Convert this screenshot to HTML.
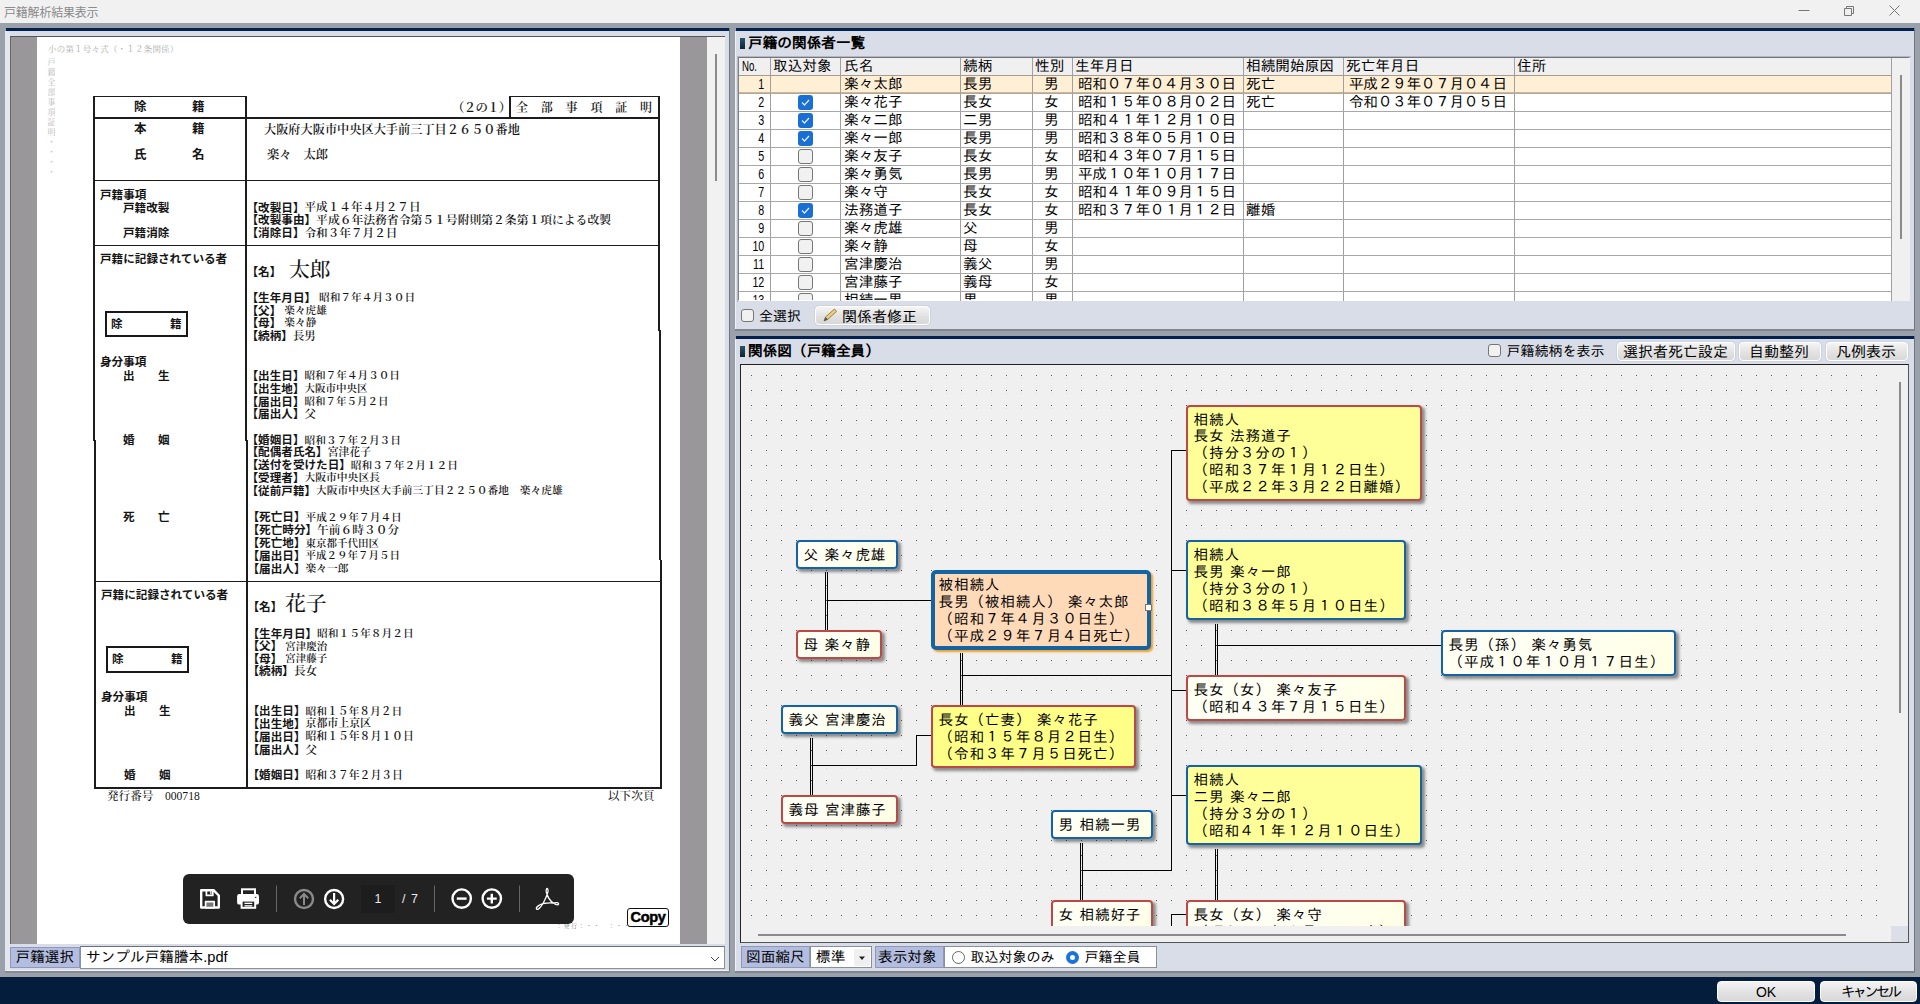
<!DOCTYPE html>
<html lang="ja"><head><meta charset="utf-8"><title>戸籍解析結果表示</title>
<style>
*{box-sizing:border-box;margin:0;padding:0}
html,body{width:1920px;height:1004px;overflow:hidden;background:#9aa1ab}
body{position:relative;font-family:'Liberation Sans','IPAGothic','Noto Sans CJK JP',sans-serif;font-size:14.67px;color:#000;line-height:1}
.abs{position:absolute}
.t{position:absolute;white-space:pre;line-height:1}
.titlebar{left:0;top:0;width:1920px;height:23px;background:#f1f1f1}
.panel{position:absolute;background:#d9dde7}
.navy{position:absolute;background:#06204a}
.doc .t{font-family:'Liberation Serif','Noto Serif CJK JP','Noto Serif CJK SC',serif;font-weight:600;color:#151515;font-size:11.6px}
.doc .g{font-family:'Liberation Sans','Noto Sans CJK JP',sans-serif;font-weight:700}.doc .gl{font-family:'Liberation Sans','Noto Sans CJK JP',sans-serif;font-weight:700;position:relative;top:.5px}
.ln{position:absolute;background:#1c1c1c}
.hd{font-weight:700}
.btn{position:absolute;border:1px solid #fff;border-radius:4px;background:linear-gradient(#f4f4f4,#e2e2e2 55%,#d8d8d8);box-shadow:0 0 0 1px #cfd3dc;text-align:center;white-space:pre}
.cb{position:absolute;width:15px;height:15px;border:1px solid #767676;border-radius:3px;background:#f1f1f1}
.cbc{position:absolute;width:15px;height:15px;border-radius:3px;background:#1a6fd2}
.node{position:absolute;border-radius:4px;box-shadow:2.5px 2.5px 3px rgba(0,0,0,.42);white-space:pre;letter-spacing:.8px;word-spacing:.65px;font-size:14.67px;line-height:17.2px;padding:4.5px 0 0 5.5px;overflow:hidden}
.nb{border:2px solid #1464a4}
.nr{border:2px solid #b94a47}
.cy{background:#ffff99}.cc{background:linear-gradient(135deg,#fffff4 40%,#ffffe4)}.co{background:#ffdab9}.cg{background:#ffff88}
.c{position:absolute;background:#000}
.lab{position:absolute;background:#b3bde0;border:1px solid #8f98b8;white-space:pre}
</style></head><body>

<div class="abs titlebar"></div>
<div class="t" style="left:4px;top:6.5px;font-size:12px;color:#8a8a8a;font-family:'Liberation Sans','Noto Sans CJK JP',sans-serif;letter-spacing:-.2px">戸籍解析結果表示</div>
<svg class="abs" style="left:1780px;top:0" width="140" height="23" viewBox="0 0 140 23"><g stroke="#777" stroke-width="1" fill="none"><path d="M18.5 10.5h11"/><path d="M64.500 8.500h7v7h-7zM66.500 8.500v-2h7v7h-2"/><path d="M109.500 5.500l10 10M119.500 5.500l-10 10"/></g></svg>
<div class="navy" style="left:6px;top:28px;width:724px;height:3px"></div>
<div class="panel" style="left:5px;top:31px;width:725px;height:940px;border-left:5px solid #e4e7ee;border-top:1px solid #d0e0f4;border-bottom:1px solid #eef0f5"></div>
<div class="abs" style="left:729px;top:28px;width:1px;height:944px;background:#6f7480"></div>
<div class="abs" style="left:5px;top:971px;width:725px;height:2px;background:#858a94"></div>
<div class="abs" style="left:10px;top:36px;width:715px;height:908px;background:#999799;border-top:1px solid #555;border-left:1px solid #666"></div>
<div class="abs" style="left:37px;top:37px;width:643px;height:907px;background:#fff"></div>
<div class="abs" style="left:707px;top:37px;width:18px;height:907px;background:#f1f1f1"></div>
<div class="abs" style="left:715px;top:54px;width:2px;height:127px;background:#8b8b8b"></div>
<div class="doc abs" style="left:0;top:0;width:740px;height:950px">
<div class="ln" style="left:93px;top:95.5px;width:153px;height:1.6px"></div>
<div class="ln" style="left:93px;top:95.5px;width:1.6px;height:345px"></div>
<div class="ln" style="left:94px;top:440px;width:1.6px;height:348.5px"></div>
<div class="ln" style="left:245px;top:95.5px;width:1.6px;height:345px"></div>
<div class="ln" style="left:246px;top:440px;width:1.6px;height:348.5px"></div>
<div class="ln" style="left:93px;top:117px;width:567px;height:1.6px"></div>
<div class="ln" style="left:658px;top:95.5px;width:1.6px;height:235px"></div>
<div class="ln" style="left:659px;top:330px;width:1.6px;height:230px"></div>
<div class="ln" style="left:660px;top:560px;width:1.6px;height:228.5px"></div>
<div class="ln" style="left:509px;top:95.5px;width:151px;height:1.6px"></div>
<div class="ln" style="left:509px;top:95.5px;width:1.6px;height:22px"></div>
<div class="ln" style="left:93px;top:179.7px;width:567px;height:1.5px"></div>
<div class="ln" style="left:93px;top:244.7px;width:567px;height:1.5px"></div>
<div class="ln" style="left:94px;top:580.5px;width:568px;height:1.5px"></div>
<div class="ln" style="left:94px;top:787px;width:568px;height:1.6px"></div>
<div class="abs" style="left:105px;top:311px;width:83px;height:26px;border:2px solid #181818"></div>
<div class="abs" style="left:106px;top:646px;width:83px;height:27px;border:2px solid #181818"></div>
<div class="t g" style="left:134px;top:100.65px;font-size:12.5px;letter-spacing:0px;">除</div>
<div class="t g" style="left:192px;top:100.65px;font-size:12.5px;letter-spacing:0px;">籍</div>
<div class="t g" style="left:134px;top:122.95px;font-size:12.5px;letter-spacing:0px;">本</div>
<div class="t g" style="left:192px;top:122.95px;font-size:12.5px;letter-spacing:0px;">籍</div>
<div class="t g" style="left:134px;top:148.95px;font-size:12.5px;letter-spacing:0px;">氏</div>
<div class="t g" style="left:192px;top:148.95px;font-size:12.5px;letter-spacing:0px;">名</div>
<div class="t" style="left:452px;top:102.05px;font-size:12.5px;letter-spacing:-0.8px;">（２の１）</div>
<div class="t" style="left:516px;top:102px;font-size:12px;letter-spacing:12.8px;">全部事項証明</div>
<div class="t" style="left:264px;top:124.2px;font-size:12.2px;letter-spacing:0px;">大阪府大阪市中央区大手前三丁目２６５０番地</div>
<div class="t" style="left:267px;top:149.2px;font-size:12.2px;letter-spacing:0px;">楽々　太郎</div>
<div class="t g" style="left:100px;top:189px;font-size:11.6px;letter-spacing:0px;">戸籍事項</div>
<div class="t g" style="left:123px;top:201.7px;font-size:11.6px;letter-spacing:0px;">戸籍改製</div>
<div class="t g" style="left:123px;top:227.2px;font-size:11.6px;letter-spacing:0px;">戸籍消除</div>
<div class="t" style="left:246.5px;top:201.1px;font-size:11.6px;letter-spacing:0px;"><span class="gl">【改製日】</span><span style="font-size:11.62px;">平成１４年４月２７日</span></div>
<div class="t" style="left:246.5px;top:213.8px;font-size:11.6px;letter-spacing:0px;"><span class="gl">【改製事由】</span><span style="font-size:11.8px;">平成６年法務省令第５１号附則第２条第１項による改製</span></div>
<div class="t" style="left:246.5px;top:226.6px;font-size:11.6px;letter-spacing:0px;"><span class="gl">【消除日】</span><span style="font-size:11.61px;">令和３年７月２日</span></div>
<div class="t g" style="left:100px;top:253.4px;font-size:11.6px;letter-spacing:0px;">戸籍に記録されている者</div>
<div class="t" style="left:246.5px;top:265.8px;font-size:11.6px;letter-spacing:0px;"><span class="gl">【名】</span><span style=""></span></div>
<div class="t" style="left:289px;top:259.9px;font-size:20.8px;letter-spacing:0px;font-weight:500">太郎</div>
<div class="t" style="left:246.5px;top:291.3px;font-size:11.6px;letter-spacing:0px;"><span class="gl">【生年月日】</span><span style="font-size:10.68px;margin-left:3px;">昭和７年４月３０日</span></div>
<div class="t" style="left:246.5px;top:304px;font-size:11.6px;letter-spacing:0px;"><span class="gl">【父】</span><span style="font-size:10.67px;margin-left:3px;">楽々虎雄</span></div>
<div class="t" style="left:246.5px;top:316.3px;font-size:11.6px;letter-spacing:0px;"><span class="gl">【母】</span><span style="font-size:10.7px;margin-left:3px;">楽々静</span></div>
<div class="t" style="left:246.5px;top:329.8px;font-size:11.6px;letter-spacing:0px;"><span class="gl">【続柄】</span><span style="font-size:11.4px;">長男</span></div>
<div class="t g" style="left:111px;top:318.4px;font-size:11.6px;letter-spacing:0px;">除</div>
<div class="t g" style="left:170px;top:318.4px;font-size:11.6px;letter-spacing:0px;">籍</div>
<div class="t g" style="left:100px;top:355.9px;font-size:11.6px;letter-spacing:0px;">身分事項</div>
<div class="t g" style="left:123px;top:369.8px;font-size:11.6px;letter-spacing:0px;">出</div>
<div class="t g" style="left:158px;top:369.8px;font-size:11.6px;letter-spacing:0px;">生</div>
<div class="t" style="left:246.5px;top:369.2px;font-size:11.6px;letter-spacing:0px;"><span class="gl">【出生日】</span><span style="font-size:10.61px;">昭和７年４月３０日</span></div>
<div class="t" style="left:246.5px;top:382.3px;font-size:11.6px;letter-spacing:0px;"><span class="gl">【出生地】</span><span style="font-size:10.52px;">大阪市中央区</span></div>
<div class="t" style="left:246.5px;top:395px;font-size:11.6px;letter-spacing:0px;"><span class="gl">【届出日】</span><span style="font-size:10.49px;">昭和７年５月２日</span></div>
<div class="t" style="left:246.5px;top:407.8px;font-size:11.6px;letter-spacing:0px;"><span class="gl">【届出人】</span><span style="">父</span></div>
<div class="t g" style="left:123px;top:434.1px;font-size:11.6px;letter-spacing:0px;">婚</div>
<div class="t g" style="left:158px;top:434.1px;font-size:11.6px;letter-spacing:0px;">姻</div>
<div class="t" style="left:246.5px;top:433.5px;font-size:11.6px;letter-spacing:0px;"><span class="gl">【婚姻日】</span><span style="font-size:10.74px;">昭和３７年２月３日</span></div>
<div class="t" style="left:246.5px;top:445.8px;font-size:11.6px;letter-spacing:0px;"><span class="gl">【配偶者氏名】</span><span style="font-size:10.85px;">宮津花子</span></div>
<div class="t" style="left:246.5px;top:458.6px;font-size:11.6px;letter-spacing:0px;"><span class="gl">【送付を受けた日】</span><span style="font-size:10.73px;">昭和３７年２月１２日</span></div>
<div class="t" style="left:246.5px;top:471.3px;font-size:11.6px;letter-spacing:0px;"><span class="gl">【受理者】</span><span style="font-size:10.79px;">大阪市中央区長</span></div>
<div class="t" style="left:246.5px;top:484px;font-size:11.6px;letter-spacing:0px;"><span class="gl">【従前戸籍】</span><span style="font-size:10.73px;">大阪市中央区大手前三丁目２２５０番地　楽々虎雄</span></div>
<div class="t g" style="left:123px;top:511.4px;font-size:11.6px;letter-spacing:0px;">死</div>
<div class="t g" style="left:158px;top:511.4px;font-size:11.6px;letter-spacing:0px;">亡</div>
<div class="t" style="left:247.5px;top:510.8px;font-size:11.6px;letter-spacing:0px;"><span class="gl">【死亡日】</span><span style="font-size:10.71px;">平成２９年７月４日</span></div>
<div class="t" style="left:247.5px;top:523.8px;font-size:11.6px;letter-spacing:0px;"><span class="gl">【死亡時分】</span><span style="font-size:11.73px;">午前６時３０分</span></div>
<div class="t" style="left:247.5px;top:536.6px;font-size:11.6px;letter-spacing:0px;"><span class="gl">【死亡地】</span><span style="font-size:10.53px;">東京都千代田区</span></div>
<div class="t" style="left:247.5px;top:549.3px;font-size:11.6px;letter-spacing:0px;"><span class="gl">【届出日】</span><span style="font-size:10.5px;">平成２９年７月５日</span></div>
<div class="t" style="left:247.5px;top:562px;font-size:11.6px;letter-spacing:0px;"><span class="gl">【届出人】</span><span style="font-size:10.72px;">楽々一郎</span></div>
<div class="t g" style="left:101px;top:588.8px;font-size:11.6px;letter-spacing:0px;">戸籍に記録されている者</div>
<div class="t" style="left:247.5px;top:600.8px;font-size:11.6px;letter-spacing:0px;"><span class="gl">【名】</span><span style=""></span></div>
<div class="t" style="left:285px;top:594.4px;font-size:20.8px;letter-spacing:0px;font-weight:500">花子</div>
<div class="t" style="left:247.5px;top:627.1px;font-size:11.6px;letter-spacing:0px;"><span class="gl">【生年月日】</span><span style="font-size:10.76px;">昭和１５年８月２日</span></div>
<div class="t" style="left:247.5px;top:639.8px;font-size:11.6px;letter-spacing:0px;"><span class="gl">【父】</span><span style="font-size:10.47px;margin-left:3px;">宮津慶治</span></div>
<div class="t" style="left:247.5px;top:652.2px;font-size:11.6px;letter-spacing:0px;"><span class="gl">【母】</span><span style="font-size:10.47px;margin-left:3px;">宮津藤子</span></div>
<div class="t" style="left:247.5px;top:664.8px;font-size:11.6px;letter-spacing:0px;"><span class="gl">【続柄】</span><span style="font-size:11.65px;">長女</span></div>
<div class="t g" style="left:112px;top:653.4px;font-size:11.6px;letter-spacing:0px;">除</div>
<div class="t g" style="left:171px;top:653.4px;font-size:11.6px;letter-spacing:0px;">籍</div>
<div class="t g" style="left:101px;top:691.4px;font-size:11.6px;letter-spacing:0px;">身分事項</div>
<div class="t g" style="left:124px;top:705.2px;font-size:11.6px;letter-spacing:0px;">出</div>
<div class="t g" style="left:159px;top:705.2px;font-size:11.6px;letter-spacing:0px;">生</div>
<div class="t" style="left:247.5px;top:704.6px;font-size:11.6px;letter-spacing:0px;"><span class="gl">【出生日】</span><span style="font-size:10.77px;">昭和１５年８月２日</span></div>
<div class="t" style="left:247.5px;top:717.3px;font-size:11.6px;letter-spacing:0px;"><span class="gl">【出生地】</span><span style="font-size:10.93px;">京都市上京区</span></div>
<div class="t" style="left:247.5px;top:730px;font-size:11.6px;letter-spacing:0px;"><span class="gl">【届出日】</span><span style="font-size:10.84px;">昭和１５年８月１０日</span></div>
<div class="t" style="left:247.5px;top:743.5px;font-size:11.6px;letter-spacing:0px;"><span class="gl">【届出人】</span><span style="">父</span></div>
<div class="t g" style="left:124px;top:769.2px;font-size:11.6px;letter-spacing:0px;">婚</div>
<div class="t g" style="left:159px;top:769.2px;font-size:11.6px;letter-spacing:0px;">姻</div>
<div class="t" style="left:247.5px;top:768.6px;font-size:11.6px;letter-spacing:0px;"><span class="gl">【婚姻日】</span><span style="font-size:10.84px;">昭和３７年２月３日</span></div>
<div class="t" style="left:107px;top:790.5px;font-size:11.6px;letter-spacing:0px;font-weight:500">発行番号　000718</div>
<div class="t" style="left:608px;top:790.5px;font-size:11.6px;letter-spacing:0px;font-weight:500">以下次頁</div>
</div>
<div class="t" style="left:48px;top:45px;font-size:8.5px;color:#9a9a9a;font-family:'Liberation Serif','Noto Serif CJK JP','Noto Serif CJK SC',serif;letter-spacing:.2px;opacity:.8">小の第１号々式（・１２条関係）</div>
<div class="t" style="left:46px;top:58px;font-size:8px;color:#a8a8a8;font-family:'Liberation Serif','Noto Serif CJK JP','Noto Serif CJK SC',serif;letter-spacing:2px;writing-mode:vertical-rl;opacity:.8">戸籍全部事項証明・・・・</div>
<div class="t" style="left:556px;top:923px;font-size:6px;color:#8a8a8a;font-family:'Liberation Serif','Noto Serif CJK JP','Noto Serif CJK SC',serif;letter-spacing:1.5px">：発行：・・　：・・：・</div>
<div class="abs" style="left:183px;top:874px;width:391px;height:50px;background:#222;border-radius:6px"></div>
<svg class="abs" style="left:183px;top:874px" width="391" height="50" viewBox="0 0 391 50">
<rect x="178" y="11" width="34" height="28" fill="#1d1d1d"/>
<g fill="none" stroke="#fff" stroke-linejoin="round">
<path d="M18.200 16.200h12.300l5.300 5.300v12h-17.600z" stroke-width="2.400"/>
<rect x="23.400" y="16" width="6.400" height="5.400" stroke-width="1.700"/>
<rect x="22.600" y="27.600" width="8.600" height="6" fill="#777" stroke-width="1.700"/>
</g>
<rect x="27.200" y="17.200" width="1.300" height="3" fill="#fff"/>
<g>
<rect x="59" y="15.300" width="13" height="6" fill="none" stroke="#fff" stroke-width="2"/>
<rect x="54.100" y="20" width="21.900" height="10.600" rx="2.200" fill="#fff"/>
<rect x="71.800" y="22.800" width="1.600" height="1.200" fill="#444"/>
<rect x="58.600" y="26.600" width="13.600" height="7.200" fill="#222" stroke="#fff" stroke-width="2"/>
<rect x="61.500" y="28.700" width="7.800" height="1.300" fill="#fff"/><rect x="61.500" y="31.200" width="7.800" height="1.300" fill="#fff"/>
</g>
<rect x="93" y="11.500" width="1" height="26.500" fill="#666"/>
<g fill="none" stroke="#8a8a8a" stroke-width="2.400"><circle cx="121" cy="25" r="9"/><path d="M121 31v-10.500M116.800 24.200l4.200-4.200 4.200 4.200" stroke-width="2"/></g>
<g fill="none" stroke="#fff" stroke-width="2.400"><circle cx="151.100" cy="25" r="9"/><path d="M151.100 19v10.500M146.900 25.800l4.200 4.200 4.200-4.200" stroke-width="2.200"/></g>
<rect x="251" y="11.500" width="1" height="26.500" fill="#666"/>
<g fill="none" stroke="#fff" stroke-width="2.400"><circle cx="278.700" cy="24.600" r="9.200"/><path d="M273.800 24.600h9.800"/></g>
<g fill="none" stroke="#fff" stroke-width="2.400"><circle cx="308.800" cy="24.600" r="9.200"/><path d="M303.900 24.600h9.800M308.800 19.700v9.800"/></g>
<rect x="336" y="11.500" width="1" height="26.500" fill="#666"/>
<path d="M353.500 35C352.500 33 357 30.500 360 29.500C364 22 366 17 364.800 15C363.800 13.500 362.800 15.500 363.300 18C364.500 23 368 27.500 370.500 29C373 28.200 376 28.600 375.600 30C375 31.500 372 30.500 370.500 29C367 28.500 363 29 360 29.500C357.500 33.500 355 36.500 353.500 35Z" fill="none" stroke="#fff" stroke-width="1.300" stroke-linejoin="round"/>
<text x="195" y="28.500" fill="#e8e8e8" font-size="12.500" text-anchor="middle" font-family="Liberation Sans,sans-serif">1</text>
<text x="227.500" y="28.500" fill="#e8e8e8" font-size="12.500" text-anchor="middle" font-family="Liberation Sans,sans-serif" letter-spacing="1">/ 7</text>
</svg>
<div class="abs" style="left:627px;top:908px;width:42px;height:19px;border:1.5px solid #111;border-radius:3px;background:#fff;font-family:Liberation Sans,sans-serif;font-weight:700;font-size:14.5px;line-height:17px;text-align:center;letter-spacing:-.3px;-webkit-text-stroke:.5px #000">Copy</div>
<div class="lab" style="left:10px;top:947px;width:70px;height:21px;font-size:14.67px;line-height:19px;padding-left:4.5px">戸籍選択</div>
<div class="abs" style="left:80px;top:946px;width:645px;height:23px;background:#fff;border:1px solid #8a8f9c;border-top-color:#6c6f78"></div>
<div class="t" style="left:86px;top:950px;font-size:14.67px">サンプル戸籍謄本.pdf</div>
<svg class="abs" style="left:709px;top:953px" width="12" height="10"><path d="M2 4l4 4 4-4" stroke="#444" fill="none" stroke-width="1"/></svg>
<div class="navy" style="left:736px;top:28px;width:1179px;height:3px"></div>
<div class="panel" style="left:735px;top:31px;width:1179px;height:298px;border-top:1px solid #d0e0f4;border-left:1px solid #eef0f5"></div>
<div class="abs" style="left:1914px;top:28px;width:1px;height:302px;background:#6f7480"></div>
<div class="abs" style="left:735px;top:329px;width:1180px;height:2px;background:#80858f"></div>
<div class="abs" style="left:740px;top:38px;width:5px;height:11px;background:linear-gradient(#2c5466,#0e2430)"></div>
<div class="t hd" style="left:748px;top:36px">戸籍の関係者一覧</div>
<div class="abs" style="left:737px;top:56px;width:1174px;height:246px;border-top:1px solid #b4b7bf;border-left:1px solid #b4b7bf"></div>
<div class="abs" style="left:738px;top:57px;width:1172px;height:244px;background:#fff;border-top:1px solid #72747a;border-left:1px solid #808288;border-right:1px solid #fff;border-bottom:1px solid #fff"></div>
<div class="abs" style="left:739px;top:58px;width:1152px;height:17px;background:#f0f0f0"></div>
<div class="abs" style="left:739px;top:75px;width:1152px;height:18px;background:#ffefd5;border-top:1px solid #a89a8c;border-bottom:1px solid #d9b58a"></div>
<div class="abs" style="left:1891px;top:58px;width:19px;height:243px;background:#f0f0f0"></div>
<div class="abs" style="left:1900px;top:75px;width:2px;height:164px;background:#8b8b8b"></div>
<div class="abs" style="left:770px;top:58px;width:1px;height:243px;background:#a0a0a0"></div>
<div class="abs" style="left:840px;top:58px;width:1px;height:243px;background:#a0a0a0"></div>
<div class="abs" style="left:960px;top:58px;width:1px;height:243px;background:#a0a0a0"></div>
<div class="abs" style="left:1032px;top:58px;width:1px;height:243px;background:#a0a0a0"></div>
<div class="abs" style="left:1072px;top:58px;width:1px;height:243px;background:#a0a0a0"></div>
<div class="abs" style="left:1243px;top:58px;width:1px;height:243px;background:#a0a0a0"></div>
<div class="abs" style="left:1343px;top:58px;width:1px;height:243px;background:#a0a0a0"></div>
<div class="abs" style="left:1514px;top:58px;width:1px;height:243px;background:#a0a0a0"></div>
<div class="abs" style="left:1891px;top:58px;width:1px;height:243px;background:#a0a0a0"></div>
<div class="abs" style="left:739px;top:93px;width:1152px;height:1px;background:#a8a8a8"></div>
<div class="abs" style="left:739px;top:111px;width:1152px;height:1px;background:#a8a8a8"></div>
<div class="abs" style="left:739px;top:129px;width:1152px;height:1px;background:#a8a8a8"></div>
<div class="abs" style="left:739px;top:147px;width:1152px;height:1px;background:#a8a8a8"></div>
<div class="abs" style="left:739px;top:165px;width:1152px;height:1px;background:#a8a8a8"></div>
<div class="abs" style="left:739px;top:183px;width:1152px;height:1px;background:#a8a8a8"></div>
<div class="abs" style="left:739px;top:201px;width:1152px;height:1px;background:#a8a8a8"></div>
<div class="abs" style="left:739px;top:219px;width:1152px;height:1px;background:#a8a8a8"></div>
<div class="abs" style="left:739px;top:237px;width:1152px;height:1px;background:#a8a8a8"></div>
<div class="abs" style="left:739px;top:255px;width:1152px;height:1px;background:#a8a8a8"></div>
<div class="abs" style="left:739px;top:273px;width:1152px;height:1px;background:#a8a8a8"></div>
<div class="abs" style="left:739px;top:291px;width:1152px;height:1px;background:#a8a8a8"></div>
<div class="t" style="left:742px;top:59px;transform:scaleX(.66);transform-origin:0 0">No.</div>
<div class="t" style="left:773px;top:59px">取込対象</div>
<div class="t" style="left:844px;top:59px">氏名</div>
<div class="t" style="left:963px;top:59px">続柄</div>
<div class="t" style="left:1035px;top:59px">性別</div>
<div class="t" style="left:1075px;top:59px">生年月日</div>
<div class="t" style="left:1246px;top:59px">相続開始原因</div>
<div class="t" style="left:1346px;top:59px">死亡年月日</div>
<div class="t" style="left:1517px;top:59px">住所</div>
<div class="abs" style="left:738px;top:58px;width:1172px;height:242px;overflow:hidden">
<div class="t" style="left:0;width:26px;top:19px;text-align:right"><span style="display:inline-block;transform:scaleX(.73);transform-origin:100% 50%">1</span></div>
<div class="t" style="left:106px;top:19px">楽々太郎</div>
<div class="t" style="left:225px;top:19px">長男</div>
<div class="t" style="left:306px;top:19px">男</div>
<div class="t" style="left:340px;top:19px;letter-spacing:-.3px">昭和０７年０４月３０日</div>
<div class="t" style="left:508px;top:19px">死亡</div>
<div class="t" style="left:611px;top:19px;letter-spacing:-.3px">平成２９年０７月０４日</div>
<div class="t" style="left:0;width:26px;top:37px;text-align:right"><span style="display:inline-block;transform:scaleX(.73);transform-origin:100% 50%">2</span></div>
<div class="cbc" style="left:60px;top:37px"></div><svg class="abs" style="left:60px;top:37px" width="15" height="15"><path d="M4 7.500l2.500 2.500 4.500-5" stroke="#dfeaff" stroke-width="1.300" fill="none"/></svg>
<div class="t" style="left:106px;top:37px">楽々花子</div>
<div class="t" style="left:225px;top:37px">長女</div>
<div class="t" style="left:306px;top:37px">女</div>
<div class="t" style="left:340px;top:37px;letter-spacing:-.3px">昭和１５年０８月０２日</div>
<div class="t" style="left:508px;top:37px">死亡</div>
<div class="t" style="left:611px;top:37px;letter-spacing:-.3px">令和０３年０７月０５日</div>
<div class="t" style="left:0;width:26px;top:55px;text-align:right"><span style="display:inline-block;transform:scaleX(.73);transform-origin:100% 50%">3</span></div>
<div class="cbc" style="left:60px;top:55px"></div><svg class="abs" style="left:60px;top:55px" width="15" height="15"><path d="M4 7.500l2.500 2.500 4.500-5" stroke="#dfeaff" stroke-width="1.300" fill="none"/></svg>
<div class="t" style="left:106px;top:55px">楽々二郎</div>
<div class="t" style="left:225px;top:55px">二男</div>
<div class="t" style="left:306px;top:55px">男</div>
<div class="t" style="left:340px;top:55px;letter-spacing:-.3px">昭和４１年１２月１０日</div>
<div class="t" style="left:0;width:26px;top:73px;text-align:right"><span style="display:inline-block;transform:scaleX(.73);transform-origin:100% 50%">4</span></div>
<div class="cbc" style="left:60px;top:73px"></div><svg class="abs" style="left:60px;top:73px" width="15" height="15"><path d="M4 7.500l2.500 2.500 4.500-5" stroke="#dfeaff" stroke-width="1.300" fill="none"/></svg>
<div class="t" style="left:106px;top:73px">楽々一郎</div>
<div class="t" style="left:225px;top:73px">長男</div>
<div class="t" style="left:306px;top:73px">男</div>
<div class="t" style="left:340px;top:73px;letter-spacing:-.3px">昭和３８年０５月１０日</div>
<div class="t" style="left:0;width:26px;top:91px;text-align:right"><span style="display:inline-block;transform:scaleX(.73);transform-origin:100% 50%">5</span></div>
<div class="cb" style="left:60px;top:91px"></div>
<div class="t" style="left:106px;top:91px">楽々友子</div>
<div class="t" style="left:225px;top:91px">長女</div>
<div class="t" style="left:306px;top:91px">女</div>
<div class="t" style="left:340px;top:91px;letter-spacing:-.3px">昭和４３年０７月１５日</div>
<div class="t" style="left:0;width:26px;top:109px;text-align:right"><span style="display:inline-block;transform:scaleX(.73);transform-origin:100% 50%">6</span></div>
<div class="cb" style="left:60px;top:109px"></div>
<div class="t" style="left:106px;top:109px">楽々勇気</div>
<div class="t" style="left:225px;top:109px">長男</div>
<div class="t" style="left:306px;top:109px">男</div>
<div class="t" style="left:340px;top:109px;letter-spacing:-.3px">平成１０年１０月１７日</div>
<div class="t" style="left:0;width:26px;top:127px;text-align:right"><span style="display:inline-block;transform:scaleX(.73);transform-origin:100% 50%">7</span></div>
<div class="cb" style="left:60px;top:127px"></div>
<div class="t" style="left:106px;top:127px">楽々守</div>
<div class="t" style="left:225px;top:127px">長女</div>
<div class="t" style="left:306px;top:127px">女</div>
<div class="t" style="left:340px;top:127px;letter-spacing:-.3px">昭和４１年０９月１５日</div>
<div class="t" style="left:0;width:26px;top:145px;text-align:right"><span style="display:inline-block;transform:scaleX(.73);transform-origin:100% 50%">8</span></div>
<div class="cbc" style="left:60px;top:145px"></div><svg class="abs" style="left:60px;top:145px" width="15" height="15"><path d="M4 7.500l2.500 2.500 4.500-5" stroke="#dfeaff" stroke-width="1.300" fill="none"/></svg>
<div class="t" style="left:106px;top:145px">法務道子</div>
<div class="t" style="left:225px;top:145px">長女</div>
<div class="t" style="left:306px;top:145px">女</div>
<div class="t" style="left:340px;top:145px;letter-spacing:-.3px">昭和３７年０１月１２日</div>
<div class="t" style="left:508px;top:145px">離婚</div>
<div class="t" style="left:0;width:26px;top:163px;text-align:right"><span style="display:inline-block;transform:scaleX(.73);transform-origin:100% 50%">9</span></div>
<div class="cb" style="left:60px;top:163px"></div>
<div class="t" style="left:106px;top:163px">楽々虎雄</div>
<div class="t" style="left:225px;top:163px">父</div>
<div class="t" style="left:306px;top:163px">男</div>
<div class="t" style="left:0;width:26px;top:181px;text-align:right"><span style="display:inline-block;transform:scaleX(.73);transform-origin:100% 50%">10</span></div>
<div class="cb" style="left:60px;top:181px"></div>
<div class="t" style="left:106px;top:181px">楽々静</div>
<div class="t" style="left:225px;top:181px">母</div>
<div class="t" style="left:306px;top:181px">女</div>
<div class="t" style="left:0;width:26px;top:199px;text-align:right"><span style="display:inline-block;transform:scaleX(.73);transform-origin:100% 50%">11</span></div>
<div class="cb" style="left:60px;top:199px"></div>
<div class="t" style="left:106px;top:199px">宮津慶治</div>
<div class="t" style="left:225px;top:199px">義父</div>
<div class="t" style="left:306px;top:199px">男</div>
<div class="t" style="left:0;width:26px;top:217px;text-align:right"><span style="display:inline-block;transform:scaleX(.73);transform-origin:100% 50%">12</span></div>
<div class="cb" style="left:60px;top:217px"></div>
<div class="t" style="left:106px;top:217px">宮津藤子</div>
<div class="t" style="left:225px;top:217px">義母</div>
<div class="t" style="left:306px;top:217px">女</div>
<div class="t" style="left:0;width:26px;top:235px;text-align:right"><span style="display:inline-block;transform:scaleX(.73);transform-origin:100% 50%">13</span></div>
<div class="cb" style="left:60px;top:235px"></div>
<div class="t" style="left:106px;top:235px">相続一男</div>
<div class="t" style="left:225px;top:235px">男</div>
<div class="t" style="left:306px;top:235px">男</div>
</div>
<div class="cb" style="left:741px;top:309px;width:13px;height:13px"></div>
<div class="t" style="left:759px;top:309px;font-size:14px">全選択</div>
<div class="btn" style="left:815px;top:306px;width:115px;height:19px"></div>
<svg class="abs" style="left:822px;top:308px" width="16" height="15"><path d="M2 13l1.500-4 9-8 2 2.500-9 8z" fill="#e9cf7a" stroke="#8a6a2a" stroke-width=".8"/><path d="M2 13l1.500-4 2.500 2.500z" fill="#555"/></svg>
<div class="t" style="left:842px;top:308.500px;font-size:15px">関係者修正</div>
<div class="navy" style="left:736px;top:336px;width:1179px;height:3px"></div>
<div class="panel" style="left:735px;top:339px;width:1179px;height:632px;border-top:1px solid #d0e0f4;border-left:1px solid #eef0f5"></div>
<div class="abs" style="left:1914px;top:336px;width:1px;height:636px;background:#6f7480"></div>
<div class="abs" style="left:735px;top:971px;width:1180px;height:2px;background:#80858f"></div>
<div class="abs" style="left:740px;top:346px;width:5px;height:11px;background:linear-gradient(#2c5466,#0e2430)"></div>
<div class="t hd" style="left:748px;top:344px">関係図（戸籍全員）</div>
<div class="cb" style="left:1488px;top:344px;width:13px;height:13px"></div>
<div class="t" style="left:1506.500px;top:344px;font-size:14px">戸籍続柄を表示</div>
<div class="btn" style="left:1617px;top:342px;width:118px;height:19px"></div>
<div class="t" style="left:1623px;top:344px;font-size:15px">選択者死亡設定</div>
<div class="btn" style="left:1739px;top:342px;width:82px;height:19px"></div>
<div class="t" style="left:1749px;top:344px;font-size:15px">自動整列</div>
<div class="btn" style="left:1826px;top:342px;width:82px;height:19px"></div>
<div class="t" style="left:1836px;top:344px;font-size:15px">凡例表示</div>
<div class="abs" style="left:740px;top:364px;width:1169px;height:579px;background:#f0f0f0;border:1px solid #222;border-right-color:#555;border-bottom-color:#555"></div>
<div class="abs" id="cv" style="left:741px;top:365px;width:1150px;height:561px;overflow:hidden;background-color:#f0f0f0">
<svg class="abs" style="left:0;top:0" width="1150" height="561"><defs><pattern id="dots" x="10" y="10" width="15" height="15" patternUnits="userSpaceOnUse"><rect x="0" y="0" width="1" height="1" fill="#5a5a5a"/><rect x="0" y="3" width="1" height="1" fill="#dadada"/></pattern></defs><rect width="1150" height="561" fill="url(#dots)"/></svg>
<div class="c" style="left:84px;top:207px;width:1px;height:58px"></div>
<div class="c" style="left:86px;top:207px;width:1px;height:58px"></div>
<div class="c" style="left:87px;top:235px;width:103px;height:1px"></div>
<div class="c" style="left:219px;top:288px;width:1px;height:52px"></div>
<div class="c" style="left:221px;top:288px;width:1px;height:52px"></div>
<div class="c" style="left:222px;top:310px;width:209px;height:1px"></div>
<div class="c" style="left:430px;top:85px;width:1px;height:421px"></div>
<div class="c" style="left:430px;top:85px;width:15px;height:1px"></div>
<div class="c" style="left:430px;top:205px;width:15px;height:1px"></div>
<div class="c" style="left:430px;top:325px;width:15px;height:1px"></div>
<div class="c" style="left:430px;top:430px;width:15px;height:1px"></div>
<div class="c" style="left:342px;top:505px;width:89px;height:1px"></div>
<div class="c" style="left:430px;top:549px;width:15px;height:1px"></div>
<div class="c" style="left:430px;top:549px;width:1px;height:20px"></div>
<div class="c" style="left:69px;top:373px;width:1px;height:57px"></div>
<div class="c" style="left:71px;top:373px;width:1px;height:57px"></div>
<div class="c" style="left:72px;top:400px;width:104px;height:1px"></div>
<div class="c" style="left:175px;top:370px;width:1px;height:31px"></div>
<div class="c" style="left:175px;top:370px;width:15px;height:1px"></div>
<div class="c" style="left:474px;top:259px;width:1px;height:51px"></div>
<div class="c" style="left:476px;top:259px;width:1px;height:51px"></div>
<div class="c" style="left:477px;top:280px;width:223px;height:1px"></div>
<div class="c" style="left:474px;top:484px;width:1px;height:51px"></div>
<div class="c" style="left:476px;top:484px;width:1px;height:51px"></div>
<div class="c" style="left:339px;top:478px;width:1px;height:57px"></div>
<div class="c" style="left:341px;top:478px;width:1px;height:57px"></div>
<div class="node nr cy" style="left:445px;top:40px;width:236px;height:96px;line-height:16.9px">相続人<br>長女 法務道子<br>（持分３分の１）<br>（昭和３７年１月１２日生）<br>（平成２２年３月２２日離婚）</div>
<div class="node nb cy" style="left:445px;top:175px;width:220px;height:80px;">相続人<br>長男 楽々一郎<br>（持分３分の１）<br>（昭和３８年５月１０日生）</div>
<div class="node nb cc" style="left:55px;top:175px;width:102px;height:29px;">父 楽々虎雄</div>
<div class="node nb co" style="left:190px;top:205px;width:220px;height:80px;border-width:4px;border-radius:5px;padding:2.5px 0 0 3.5px;box-shadow:2px 2px 2px rgba(235,150,20,.9)">被相続人<br>長男（被相続人） 楽々太郎<br>（昭和７年４月３０日生）<br>（平成２９年７月４日死亡）</div>
<div class="node nr cc" style="left:55px;top:265px;width:86px;height:29px;">母 楽々静</div>
<div class="node nb cc" style="left:700px;top:265px;width:235px;height:46px;">長男（孫） 楽々勇気<br>（平成１０年１０月１７日生）</div>
<div class="node nr cc" style="left:445px;top:310px;width:220px;height:46px;">長女（女） 楽々友子<br>（昭和４３年７月１５日生）</div>
<div class="node nr cg" style="left:190px;top:340px;width:205px;height:63px;">長女（亡妻） 楽々花子<br>（昭和１５年８月２日生）<br>（令和３年７月５日死亡）</div>
<div class="node nb cc" style="left:40px;top:340px;width:117px;height:29px;">義父 宮津慶治</div>
<div class="node nr cc" style="left:40px;top:430px;width:117px;height:29px;">義母 宮津藤子</div>
<div class="node nb cy" style="left:445px;top:400px;width:236px;height:80px;">相続人<br>二男 楽々二郎<br>（持分３分の１）<br>（昭和４１年１２月１０日生）</div>
<div class="node nb cc" style="left:310px;top:445px;width:102px;height:29px;">男 相続一男</div>
<div class="node nr cc" style="left:310px;top:535px;width:102px;height:46px;">女 相続好子</div>
<div class="node nr cc" style="left:445px;top:535px;width:220px;height:46px;">長女（女） 楽々守<br>（昭和４１年９月１５日生）</div>
<div class="abs" style="left:404px;top:239px;width:7px;height:7px;background:#fff;border:1px solid #777"></div>
</div>
<div class="abs" style="left:1891px;top:365px;width:17px;height:561px;background:#f0f0f0"></div>
<div class="abs" style="left:1899px;top:382px;width:2px;height:331px;background:#8b8b8b"></div>
<div class="abs" style="left:741px;top:926px;width:1167px;height:16px;background:#f0f0f0"></div>
<div class="abs" style="left:758px;top:934px;width:1088px;height:2px;background:#8b8b8b"></div>
<div class="abs" style="left:1891px;top:926px;width:17px;height:16px;background:#dcdfe8"></div>
<div class="lab" style="left:741px;top:946px;width:69px;height:22px;line-height:21px;padding-left:4px">図面縮尺</div>
<div class="abs" style="left:810px;top:946px;width:62px;height:22px;background:#fff;border:1px solid #8a8f9c"></div><div class="abs" style="left:854px;top:949px;width:16px;height:17px;background:#f0f0f0"></div>
<div class="t" style="left:816px;top:950px">標準</div>
<svg class="abs" style="left:858px;top:956px" width="8" height="5"><path d="M1 .5h6l-3 3.500z" fill="#222"/></svg>
<div class="lab" style="left:875px;top:946px;width:69px;height:22px;line-height:21px;padding-left:2px">表示対象</div>
<div class="abs" style="left:944px;top:946px;width:213px;height:22px;background:#fff;border:1px solid #8a8f9c"></div>
<div class="abs" style="left:952px;top:951px;width:13px;height:13px;border:1px solid #666;border-radius:50%;background:#fff"></div>
<div class="t" style="left:970.500px;top:950px;font-size:14px">取込対象のみ</div>
<div class="abs" style="left:1066px;top:951px;width:13px;height:13px;border:4px solid #1a73d9;border-radius:50%;background:#fff"></div>
<div class="t" style="left:1084.500px;top:950px;font-size:14px">戸籍全員</div>
<div class="abs" style="left:0;top:977px;width:1920px;height:27px;background:#041d3d"></div>
<div class="btn" style="left:1717px;top:981px;width:98px;height:21px;box-shadow:none;line-height:21px;font-family:'Liberation Sans',sans-serif;font-size:14px">OK</div>
<div class="btn" style="left:1820px;top:981px;width:97px;height:21px;box-shadow:none;line-height:20px;letter-spacing:-3px;padding-left:3px">キャンセル</div>
</body></html>
